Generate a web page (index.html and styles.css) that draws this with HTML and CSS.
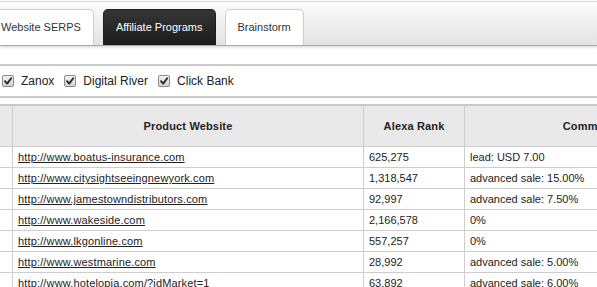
FILE: index.html
```html
<!DOCTYPE html>
<html>
<head>
<meta charset="utf-8">
<link rel="stylesheet" href="styles.css">
</head>
<body>
<div class="tabbar">
  <div class="tabs">
    <div class="tab first">Website SERPS</div>
    <div class="tab active">Affiliate Programs</div>
    <div class="tab">Brainstorm</div>
  </div>
</div>
<div class="filters">
  <label class="opt"><span class="cb"><svg viewBox="0 0 12 12" width="12" height="12"><path d="M3 6.2 L5.2 8.6 L9.2 3.2" fill="none" stroke="#2b2b2b" stroke-width="1.9" stroke-linecap="round" stroke-linejoin="round"/></svg></span>Zanox</label>
  <label class="opt"><span class="cb"><svg viewBox="0 0 12 12" width="12" height="12"><path d="M3 6.2 L5.2 8.6 L9.2 3.2" fill="none" stroke="#2b2b2b" stroke-width="1.9" stroke-linecap="round" stroke-linejoin="round"/></svg></span>Digital River</label>
  <label class="opt"><span class="cb"><svg viewBox="0 0 12 12" width="12" height="12"><path d="M3 6.2 L5.2 8.6 L9.2 3.2" fill="none" stroke="#2b2b2b" stroke-width="1.9" stroke-linecap="round" stroke-linejoin="round"/></svg></span>Click Bank</label>
</div>
<table class="grid">
  <colgroup>
    <col class="c0"><col class="c1"><col class="c2"><col class="c3">
  </colgroup>
  <thead>
    <tr><th></th><th>Product Website</th><th>Alexa Rank</th><th>Commission</th></tr>
  </thead>
  <tbody>
    <tr><td></td><td><a href="#">http://www.boatus-insurance.com</a></td><td>625,275</td><td>lead: USD 7.00</td></tr>
    <tr><td></td><td><a href="#">http://www.citysightseeingnewyork.com</a></td><td>1,318,547</td><td>advanced sale: 15.00%</td></tr>
    <tr><td></td><td><a href="#">http://www.jamestowndistributors.com</a></td><td>92,997</td><td>advanced sale: 7.50%</td></tr>
    <tr><td></td><td><a href="#">http://www.wakeside.com</a></td><td>2,166,578</td><td>0%</td></tr>
    <tr><td></td><td><a href="#">http://www.lkgonline.com</a></td><td>557,257</td><td>0%</td></tr>
    <tr><td></td><td><a href="#">http://www.westmarine.com</a></td><td>28,992</td><td>advanced sale: 5.00%</td></tr>
    <tr><td></td><td><a href="#">http://www.hotelopia.com/?idMarket=1</a></td><td>63,892</td><td>advanced sale: 6.00%</td></tr>
  </tbody>
</table>
</body>
</html>
```
FILE: styles.css
```css
html, body {
  margin: 0;
  padding: 0;
  background: #fff;
  overflow: hidden;
}
body {
  font-family: "Liberation Sans", Arial, sans-serif;
  color: #222;
}
.tabbar {
  margin-top: 1px;
  height: 43px;
  border-top: 1px solid #d9d9d9;
  border-bottom: 1px solid #a9a9a9;
  background: linear-gradient(#fbfbfb, #e3e3e3);
  box-shadow: 0 1px 3px rgba(0, 0, 0, 0.18);
}
.tabs {
  display: flex;
  align-items: flex-end;
  height: 100%;
  gap: 9px;
  margin-left: -12px;
}
.tab {
  box-sizing: border-box;
  height: 36px;
  padding: 0 12px;
  border: 1px solid #cdcdcd;
  border-bottom: 0;
  border-radius: 5px 5px 0 0;
  background: #fff;
  font-size: 11px;
  line-height: 35px;
  color: #333;
  white-space: nowrap;
}
.tab.active {
  background: linear-gradient(#363636, #1b1b1b);
  border-color: #1e1e1e;
  color: #fff;
}
.filters {
  margin-top: 18px;
  height: 30px;
  border-top: 2px solid #cacaca;
  border-bottom: 2px solid #cacaca;
  display: flex;
  align-items: center;
  padding-left: 2px;
  font-size: 12px;
  color: #222;
}
.opt {
  display: flex;
  align-items: center;
  gap: 7px;
  margin-right: 10px;
}
.cb {
  box-sizing: border-box;
  width: 12px;
  height: 12px;
  border: 1px solid #8c8c8c;
  border-radius: 2px;
  background: linear-gradient(#f2f2f2, #d2d2d2);
  display: flex;
  align-items: center;
  justify-content: center;
}
.cb svg {
  display: block;
  flex: none;
}
.grid {
  margin-top: 6px;
  margin-left: -40px;
  border-collapse: separate;
  border-spacing: 0;
  table-layout: fixed;
  width: 769px;
  font-size: 11px;
}
.c0 { width: 53px; }
.c1 { width: 351px; }
.c2 { width: 101px; }
.c3 { width: 264px; }
.grid th {
  background: #e9e9e9;
  border-top: 2px solid #cacaca;
  border-bottom: 1px solid #cdcdcd;
  border-right: 1px solid #cdcdcd;
  line-height: 40px;
  padding: 0 5px;
  font-weight: bold;
  color: #222;
  text-align: center;
  white-space: nowrap;
  letter-spacing: 0.15px;
}
.grid td {
  border-bottom: 1px solid #cdcdcd;
  border-right: 1px solid #cdcdcd;
  line-height: 20px;
  padding: 0 5px;
  white-space: nowrap;
  text-align: left;
}
.grid a {
  color: #222;
  text-decoration: underline;
  letter-spacing: 0.15px;
}
```
